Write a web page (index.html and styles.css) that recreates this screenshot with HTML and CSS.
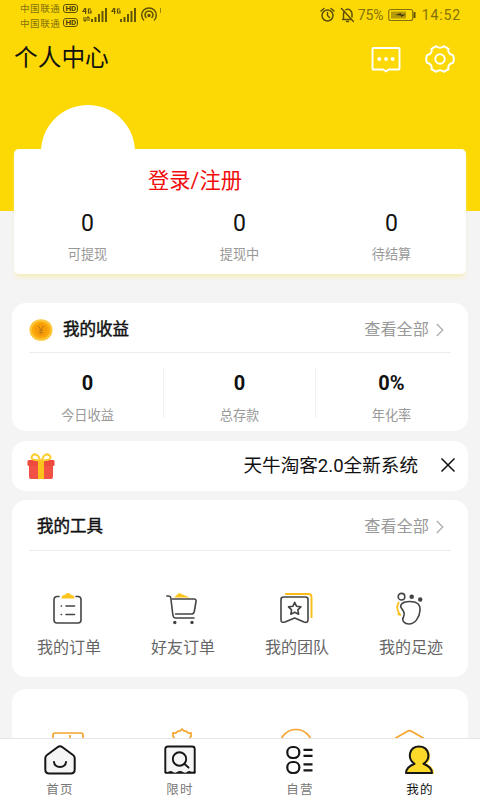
FILE: index.html
```html
<!DOCTYPE html>
<html lang="zh-CN">
<head>
<meta charset="utf-8">
<title>个人中心</title>
<link rel="stylesheet" href="styles.css">
</head>
<body>
<main class="page">
  <div class="status">
    <div class="carriers">
      <div class="carrier"><span>中国联通</span><b>HD</b></div>
      <div class="carrier"><span>中国联通</span><b>HD</b></div>
    </div>
    <svg class="signals" width="80" height="20" viewBox="0 0 80 20" fill="none" stroke="#5e5008">
      <g stroke-width="1.2"><path d="M3 3L1 6.500h3.500M3.600 3v6M9 4H6.500v4H9V6H7.800"/><path d="M1 13h6l-1.500-1.500M8 15H2l1.500 1.500"/></g>
      <path stroke-width="1.900" d="M10 14v3M13.500 12v5M17 9v8M20.500 6v11M24 3v14"/>
      <g stroke-width="1.2"><path d="M32 3l-2 3.500h3.500M32.600 3v6M38 4h-2.500v4H38V6h-1.200"/></g>
      <path stroke-width="1.900" d="M39 14v3M42.500 12v5M46 9v8M49.500 6v11M53 3v14"/>
      <g stroke-width="1.500"><path d="M62 15.500a7.300 7.300 0 1 1 10 0M64.500 13a4 4 0 1 1 5 0"/><circle cx="67" cy="10.500" r="1" fill="#5e5008"/></g>
      <path stroke-width=".6" d="M78.500 3v5"/>
    </svg>
    <div class="status-right">
      <svg width="34" height="16" viewBox="0 0 34 16" fill="none" stroke="#5e5008" stroke-width="1.500" stroke-linecap="round"><circle cx="7.500" cy="8.500" r="5.500"/><path d="M7.500 5.500v3l2 2M1 4l3-2.500M14 4l-3-2.500M21.500 1.500l12 13M22.500 12.500h9M23.500 12V7c0-1 .3-2 .9-2.700M26 2.700c3-1.500 6 1 6 4.300v3M26.500 14.500h2"/></svg>
      <span class="battery-text">75%</span>
      <svg width="28" height="14" viewBox="0 0 28 14"><rect x=".7" y="1.500" width="24" height="11" rx="2" fill="none" stroke="#84710b" stroke-width="1.100"/><rect x="3" y="3.500" width="15" height="7" fill="#b59b0b"/><path d="M7 7l6-2v1.500h5L13 9V7.500z" fill="#3e3508"/><path d="M26.500 4v6" stroke="#5e5008" stroke-width="2"/></svg>
      <span class="clock">14:52</span>
    </div>
  </div>
  <header class="titlebar">
    <h1>个人中心</h1>
    <svg class="chat" width="30" height="26" viewBox="0 0 30 26" fill="none" stroke="#fff" stroke-width="1.900" stroke-linejoin="round"><path d="M2.500 1h25a1 1 0 0 1 1 1v19.500a1 1 0 0 1-1 1h-9.700L15 24.500l-2.800-2H2.500a1 1 0 0 1-1-1V2a1 1 0 0 1 1-1z"/><g fill="#fff" stroke="none"><circle cx="8.300" cy="12" r="1.900"/><circle cx="15" cy="12" r="1.900"/><circle cx="21.700" cy="12" r="1.900"/></g></svg>
    <svg class="gear" width="32" height="28" viewBox="0 0 32 28" fill="none" stroke="#fff" stroke-width="2" stroke-linejoin="round"><path d="M12.300 1.200c2 2.200 5.400 2.200 7.400 0l4.800 2.600c-.8 3 .8 5.700 4.300 6.200q2 4 0 8c-3.500.5-5.100 3.200-4.300 6.200l-4.800 2.600c-2-2.200-5.400-2.200-7.400 0l-4.800-2.600c.8-3-.8-5.700-4.300-6.200q-2-4 0-8c3.500-.5 5.100-3.200 4.300-6.200z"/><circle cx="16" cy="14" r="4.700"/></svg>
  </header>
  <div class="avatar"></div>
  <section class="account">
    <a class="login">登录/注册</a>
    <div class="triple">
      <div class="stat"><strong>0</strong><span>可提现</span></div>
      <div class="stat"><strong>0</strong><span>提现中</span></div>
      <div class="stat"><strong>0</strong><span>待结算</span></div>
    </div>
  </section>

  <section class="card income">
    <div class="card-head">
      <svg class="coin" width="24" height="22" viewBox="0 0 24 22"><ellipse cx="12" cy="11" rx="11.500" ry="10.800" fill="#fcc63b"/><ellipse cx="12" cy="11" rx="9.300" ry="8.600" fill="#fba90d"/><circle cx="12" cy="11" r="6.500" fill="#f59a08"/><path d="M9.500 7l2.500 4 2.500-4M12 11v4.500M10 11.500h4M10 13.500h4" fill="none" stroke="#b97713" stroke-width=".9"/></svg>
      <h2>我的收益</h2><a class="all">查看全部</a>
      <svg class="arrow" width="8" height="14" viewBox="0 0 8 14"><path d="M.8 1l6 6-6 6" fill="none" stroke="#aaa" stroke-width="1.200"/></svg>
    </div>
    <div class="triple split">
      <div class="stat"><strong>0</strong><span>今日收益</span></div>
      <div class="stat"><strong>0</strong><span>总存款</span></div>
      <div class="stat"><strong>0%</strong><span>年化率</span></div>
    </div>
  </section>

  <section class="card notice">
    <svg width="28" height="26" viewBox="0 0 28 26"><rect x="2" y="9" width="24" height="17" rx="2" fill="#f15245"/><rect x=".5" y="7" width="27" height="6" rx="1.500" fill="#ee493f"/><path d="M11 7h6v19h-6z" fill="#fdc11b"/><path d="M13 7C5 8 3 5 5.500 2.500S12 2 13 7zm2 0c8 1 10-2 7.500-4.500S16 2 15 7z" fill="none" stroke="#fdcc31" stroke-width="2"/></svg>
    <p>天牛淘客2.0全新系统</p>
    <svg width="16" height="16" viewBox="0 0 16 16"><path d="M1.500 1.500l13 13M14.500 1.500l-13 13" stroke="#111" stroke-width="1.500"/></svg>
  </section>

  <section class="card tools">
    <div class="card-head">
      <h2>我的工具</h2><a class="all">查看全部</a>
      <svg class="arrow" width="8" height="14" viewBox="0 0 8 14"><path d="M.8 1l6 6-6 6" fill="none" stroke="#aaa" stroke-width="1.200"/></svg>
    </div>
    <div class="tool-grid">
      <div class="tool"><svg width="34" height="34" viewBox="0 0 34 34" fill="none" stroke="#444" stroke-width="1.600" stroke-linecap="round"><path d="M7 4.500H5a3 3 0 0 0-3 3V28a3 3 0 0 0 3 3h21a3 3 0 0 0 3-3V7.500a3 3 0 0 0-3-3h-2M14 14h8.500M14 22.500h8.500M9.200 14h.3M9.200 22.500h.3"/><path d="M9.500 6.500c0-3 2-3.500 3.500-3.500 1-2.700 5-2.700 6 0 2 0 3.500 1 3.500 3.500z" fill="#fbc51d" stroke="none"/></svg><span>我的订单</span></div>
      <div class="tool"><svg width="34" height="34" viewBox="0 0 34 34" fill="none" stroke="#444" stroke-width="1.600" stroke-linecap="round" stroke-linejoin="round"><path d="M8 5.500l5-4.500 11 4.500z" fill="#fbc51d" stroke="none"/><path d="M0.800 4h1.700q2 0 2.300 2l2 16.500Q7.300 26 9.500 26H28M6.500 7h21.500q2.500 0 2 2.500L28.300 19.500q-.5 2.500-3 2.500H9.500"/><g fill="#444" stroke="none"><circle cx="8.800" cy="30.500" r="1.700"/><circle cx="26" cy="30.500" r="1.700"/></g></svg><span>好友订单</span></div>
      <div class="tool"><svg width="34" height="34" viewBox="0 0 34 34" fill="none" stroke="#444" stroke-width="1.600" stroke-linejoin="round"><path d="M5 2H28.500q3 0 3 3v21" stroke="#fbbe18" stroke-width="1.900"/><path d="M3.500 5h22q2.500 0 2.500 2.500v20q0 4-4 2.500l-9.300-4L5 30q-4 1.200-4-2V7.500Q1 5 3.500 5z"/><path d="M14.700 10.300l1.900 4 4.300.6-3.100 3 .8 4.300-3.900-2-3.900 2 .8-4.300-3.100-3 4.300-.6z"/></svg><span>我的团队</span></div>
      <div class="tool"><svg width="34" height="34" viewBox="0 0 34 34" fill="none" stroke="#444" stroke-width="1.600"><circle cx="7.500" cy="4.700" r="3.300"/><g fill="#444" stroke="none"><circle cx="17.700" cy="4.700" r="2.300"/><circle cx="26.200" cy="7.500" r="2.200"/></g><path d="M8 17C4.500 12.500 9 9.500 15.500 9.500c8 0 11 3 10.500 9-.5 7-5 13.500-11 13.500-5 0-7.500-3.500-5.500-7 2-4 0-6-1.500-8z"/><path d="M5 10Q1 16.500 6 22.500M3.500 22.200l3.500.6" stroke="#fbbe18" stroke-width="1.800"/></svg><span>我的足迹</span></div>
    </div>
  </section>

  <section class="card more">
    <svg width="32" height="32" viewBox="0 0 32 32"><path d="M1 15V3q0-2 2-2h26q2 0 2 2v12M18 3v9"/></svg>
    <svg width="32" height="32" viewBox="0 0 32 32"><path d="M8 12V9.500L7 8.500V5q3.500.5 4.500-1.700 3 .2 4.500-2 1.500 2.200 4.500 2Q21.500 5.500 25 5v3.500l-1 1V12"/></svg>
    <svg width="32" height="32" viewBox="0 0 32 32"><circle cx="16" cy="17.500" r="16"/></svg>
    <svg width="32" height="32" viewBox="0 0 32 32"><path d="M1 10.500l12.500-7.300q2-1.200 4 0L30 10.500"/></svg>
  </section>
</main>
<nav class="tabs">
  <a class="tab"><svg width="34" height="32" viewBox="0 0 34 32" fill="none" stroke="#161616" stroke-width="2" stroke-linecap="round" stroke-linejoin="round"><path fill="#f5f5f5" d="M14.500 2.200q2.500-1.900 5 0L30 10q1.700 1.200 1.700 3v11.500q0 4-4 4H6.300q-4 0-4-4V13q0-1.800 1.700-3z"/><path d="M11 17c.7 6.500 11.300 6.500 12 0"/></svg><span>首页</span></a>
  <a class="tab"><svg width="34" height="32" viewBox="0 0 34 32" fill="none" stroke="#161616" stroke-width="1.900"><path d="M2.300 28V4q0-2.500 2.500-2.500h24.400q2.500 0 2.500 2.500v24" fill="#f5f5f5"/><path d="M2 26q2 1.800 4 .6 2-1.200 4 .4 2 1.300 4 0 3-1.800 6 0 2 1.300 4 0 2-1.600 4-.4 2 .6 4.300-.6v2.800H2z" fill="#161616" stroke="none"/><circle cx="16.500" cy="14" r="6.700"/><path d="M21.500 19l4 3.500" stroke-linecap="round"/></svg><span>限时</span></a>
  <a class="tab"><svg width="34" height="32" viewBox="0 0 34 32" fill="none" stroke="#161616" stroke-width="2.200"><rect x="4.300" y="2" width="12" height="11" rx="5.200"/><rect x="4.300" y="17" width="12" height="11" rx="5.200"/><path d="M20.500 4.800h9M20.500 10.800h9M20.500 19.300h9M20.500 25.300h9"/></svg><span>自营</span></a>
  <a class="tab active"><svg width="34" height="32" viewBox="0 0 34 32"><path d="M14 19C6 13 9 1.500 18 1.500S30 13 24 18.500c5 3 7 6 7 10.500H9z" fill="#fdd92a"/><path d="M11.500 18.800C3.500 13 6.500 1.500 16 1.500s13 11.500 4.500 17.300c5 2 8.300 4.500 8.500 9.200H3c.2-4.700 3.500-7.200 8.500-9.200z" fill="#fdd92a" stroke="#161616" stroke-width="2" stroke-linejoin="round"/></svg><span>我的</span></a>
</nav>
</body>
</html>
```

FILE: styles.css
```css
* { box-sizing: border-box; }
body {
  margin: 0; height: 800px; overflow: hidden; display: flex; flex-direction: column;
  background: #f4f4f4; color: #111;
  font-family: Roboto, "Noto Sans CJK SC", sans-serif;
}
h1, h2, p { margin: 0; font-weight: 400; }
svg { display: block; flex: none; }
.page { height: 738px; flex: none; overflow: hidden; background: linear-gradient(#fcd905 211px, #f4f4f4 211px); }
.status { display: flex; height: 32px; padding: 1px 19px 0 20px; color: #84710b; }
.carriers { width: 62px; }
.carrier { display: flex; align-items: center; height: 14.5px; gap: 3px; font-size: 9.5px; letter-spacing: .6px; white-space: nowrap; }
.carrier b { font-size: 8px; line-height: 7px; letter-spacing: 0; padding: 0 1px; border: 1px solid #5e5008; border-radius: 3px; color: #4b4008; }
.signals { margin-top: 4px; }
.status-right { display: flex; align-items: center; height: 28px; margin-left: auto; }
.battery-text { font-size: 14px; margin: 0 4px 0 4px; }
.clock { font-size: 14px; letter-spacing: .9px; margin-left: 6px; }
.titlebar { display: flex; align-items: center; height: 52px; padding: 0 24px 0 14px; }
h1 { font-size: 23.7px; line-height: 30px; margin: 0 auto 0 0; }
.chat { margin: 4px 23px 0 0; }
.gear { margin-top: 2px; }
.avatar { width: 94px; height: 94px; margin: 21px 0 -50px 41px; border-radius: 50%; background: #fff; }
.account { height: 125px; margin: 0 14px; padding-top: 16px; border-radius: 5px; background: #fff; box-shadow: 0 5px 5px -2px #f7edb9; }
.login { display: block; margin-left: 134px; font-size: 21.3px; line-height: 31px; color: #f20d0d; white-space: nowrap; }
.triple { display: grid; grid-template-columns: repeat(3, 152px); justify-content: center; }
.stat { display: flex; flex-direction: column; align-items: center; padding-right: 1px; }
.stat strong { font-size: 23px; line-height: 30px; font-weight: 400; }
.stat span { font-size: 13.2px; line-height: 20px; color: #999; }
.account .triple { padding-top: 13px; }
.account .stat span { margin-top: 6px; }
.card { margin: 0 12px; border-radius: 14px; background: #fff; }
.income { height: 128px; margin-top: 29px; }
.card-head { display: flex; align-items: center; height: 50px; margin: 0 17px; padding: 4px 7px 0 0; border-bottom: 1px solid #ececec; }
.coin { margin-right: 10px; }
h2 { font-size: 16.5px; line-height: 24px; margin-right: auto; -webkit-text-stroke: .45px #111; }
.all { font-size: 16.2px; line-height: 24px; color: #999; margin-right: 7px; }
.split { padding-top: 15px; }
.split .stat { height: 50px; border-right: 1px solid #f0f0f0; }
.split .stat { padding: 4px 0 0; }
.split .stat:last-child { border-right-color: transparent; }
.split strong { font-size: 20px; line-height: 22px; font-weight: 700; }
.split span { margin-top: 12px; }
.notice { display: flex; align-items: center; height: 50px; margin-top: 9.5px; padding: 0 12px 0 15px; }
.notice p { margin: 0 22px 0 auto; font-size: 18.6px; line-height: 28px; }
.notice svg:last-child { margin-top: -1px; }
.tools { height: 177px; margin-top: 9.5px; }
.tools .card-head { height: 51px; }
.tools h2 { margin-left: 8px; }
.tool-grid { display: grid; grid-template-columns: repeat(4, 114px); padding-top: 41px; }
.tool { display: flex; flex-direction: column; align-items: center; gap: 10px; }
.tool span { font-size: 16px; line-height: 24px; color: #666; }
.more { display: grid; grid-template-columns: repeat(4, 114px); justify-items: center; height: 80px; margin-top: 12px; padding-top: 39px; }
.more svg { fill: none; stroke: #f5a42d; stroke-width: 1.7; margin-top: 4px; margin-right: 2px; }
.more svg:nth-child(n+2) { margin-top: 0; }
.tabs { display: grid; grid-template-columns: repeat(4, 1fr); height: 62px; flex: none; border-top: 1px solid #e6e6e6; background: #fff; }
.tab { display: flex; flex-direction: column; align-items: center; padding-top: 6px; }
.tab span { font-family: "Noto Sans CJK SC", sans-serif; font-size: 12.5px; line-height: 18px; margin-top: 3px; letter-spacing: 1.2px; color: #777; }
.tab.active span { color: #111; }
```
